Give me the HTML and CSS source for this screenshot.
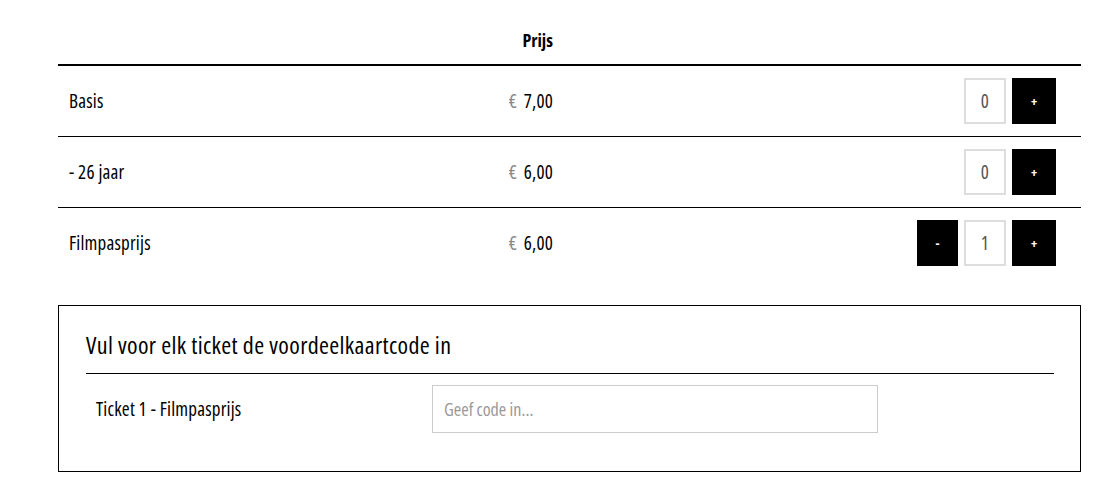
FILE: index.html
```html
<!DOCTYPE html>
<html lang="nl">
<head>
<meta charset="utf-8">
<title>Tickets</title>
<link rel="stylesheet" href="styles.css">
</head>
<body>
<div class="page">
  <div class="tickets">
    <div class="row head">
      <div class="c-name"></div>
      <div class="c-price">Prijs</div>
      <div class="c-qty"></div>
    </div>
    <div class="row line">
      <div class="c-name">Basis</div>
      <div class="c-price"><span class="eur">€</span> 7,00</div>
      <div class="c-qty"><span class="count">0</span><button class="btn">+</button></div>
    </div>
    <div class="row line">
      <div class="c-name">- 26 jaar</div>
      <div class="c-price"><span class="eur">€</span> 6,00</div>
      <div class="c-qty"><span class="count">0</span><button class="btn">+</button></div>
    </div>
    <div class="row last">
      <div class="c-name">Filmpasprijs</div>
      <div class="c-price"><span class="eur">€</span> 6,00</div>
      <div class="c-qty"><button class="btn minus">-</button><span class="count">1</span><button class="btn">+</button></div>
    </div>
  </div>

  <div class="codes">
    <h2 class="codes-title">Vul voor elk ticket de voordeelkaartcode in</h2>
    <div class="code-row">
      <div class="code-label">Ticket 1 - Filmpasprijs</div>
      <input class="code-input" type="text" placeholder="Geef code in...">
    </div>
  </div>
</div>
</body>
</html>
```

FILE: styles.css
```css
* { box-sizing: border-box; }

body {
  margin: 0;
  background: #fff;
  color: #000;
  font-family: "Open Sans", "DejaVu Sans Condensed", sans-serif;
  font-stretch: 75%;
  font-weight: 400;
  font-size: 19px;
  letter-spacing: 0.2px;
}

.page {
  width: 1023px;
  margin-left: 58px;
  padding-top: 20px;
}

.row {
  display: grid;
  grid-template-columns: 385px 110px 1fr;
  align-items: center;
}

.head {
  height: 46px;
  border-bottom: 2px solid #000;
  font-weight: 700;
  font-size: 18px;
  letter-spacing: 0;
  align-items: start;
  padding-top: 8px;
}

.line {
  height: 71px;
  border-bottom: 1px solid #000;
}

.last {
  height: 70px;
}

.c-name {
  padding-left: 11px;
}

.c-price {
  text-align: right;
}

.eur {
  color: #888;
  margin-right: 3px;
}

.c-qty {
  display: flex;
  justify-content: flex-end;
  align-items: center;
  gap: 6px;
  padding-right: 25px;
}

.count {
  width: 42px;
  height: 46px;
  border: 2px solid #ddd;
  display: flex;
  align-items: center;
  justify-content: center;
  color: #555;
  font-size: 19px;
}

.btn {
  width: 44px;
  height: 46px;
  border: 0;
  background: #000;
  color: #fff;
  font-family: inherit;
  font-stretch: inherit;
  font-size: 13px;
  font-weight: bold;
  padding: 0;
}

.minus {
  width: 41px;
}

.codes {
  margin-top: 27px;
  border: 1px solid #000;
  padding: 24px 26px 38px 27px;
}

.codes-title {
  margin: 0;
  font-size: 24px;
  font-weight: 400;
  letter-spacing: 0.35px;
  line-height: 30px;
  padding-bottom: 13px;
  border-bottom: 1px solid #000;
}

.code-row {
  display: grid;
  grid-template-columns: 346px 446px;
  align-items: center;
  margin-top: 11px;
}

.code-label {
  padding-left: 10px;
}

.code-input {
  width: 446px;
  height: 48px;
  border: 1px solid #ccc;
  padding: 0 11px;
  font-family: inherit;
  font-stretch: inherit;
  font-weight: inherit;
  letter-spacing: 0;
  font-size: 18px;
  color: #333;
  outline: none;
}

.code-input::placeholder {
  color: #999;
}
```
